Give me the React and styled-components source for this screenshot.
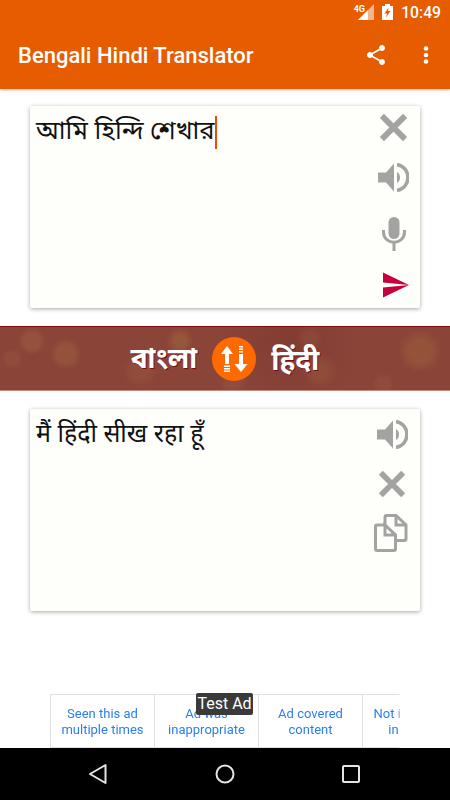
import React from "react";
import styled, { createGlobalStyle } from "styled-components";

const GlobalStyle = createGlobalStyle`
  html, body { margin: 0; padding: 0; background: #fff; }
  * { box-sizing: border-box; }
  body { font-family: Roboto, "Noto Sans", sans-serif; }
`;

const CloseIcon = ({ size = 29 }) => (
  <svg width={size} height={size} viewBox="0 0 30 30">
    <path d="M3 3 L27 27 M27 3 L3 27" stroke="#a3a3a1" strokeWidth="6" />
  </svg>
);

const SpeakerIcon = () => (
  <svg width="31" height="29" viewBox="0 0 31 29">
    <path d="M0 9.500 H8 L16 0.500 V28.500 L8 19.500 H0 Z" fill="#a3a3a1" />
    <path d="M19 9 C23 11 23 18 19 20 Z" fill="#a3a3a1" />
    <path d="M19 1.500 C33.500 4 33.500 25 19 27.500" fill="none" stroke="#a3a3a1" strokeWidth="3.500" />
  </svg>
);

const MicIcon = () => (
  <svg width="24" height="34" viewBox="0 0 24 34">
    <rect x="6.500" y="0" width="11" height="22" rx="5.500" fill="#a3a3a1" />
    <path d="M1.500 13 V15 C1.500 28.500 22.500 28.500 22.500 15 V13" fill="none" stroke="#a3a3a1" strokeWidth="3" />
    <path d="M12 25 V34" stroke="#a3a3a1" strokeWidth="3" />
  </svg>
);

const SendIcon = () => (
  <svg width="26" height="26" viewBox="0 0 26 26">
    <path d="M0 0.500 L26 13 L0 10.500 Z M0 15.500 L26 13 L0 25.500 Z" fill="#c8003c" />
  </svg>
);

const CopyIcon = () => (
  <svg width="35" height="38" viewBox="0 0 35 38" fill="none" stroke="#a3a3a1" strokeWidth="3">
    <path d="M12 11 H4 Q2.500 11 2.500 12.500 V35 Q2.500 36.500 4 36.500 H21 Q22.500 36.500 22.500 35 V21 L12 11 V21 H22.500" />
    <path d="M12 11 V3 Q12 1.500 13.500 1.500 H23 L33 11 V25 Q33 26.500 31.500 26.500 H22.500" />
    <path d="M23 1.500 V11 H33" />
  </svg>
);

const SwapIcon = () => (
  <svg width="30" height="28" viewBox="0 0 30 28" fill="#fff">
    <path d="M8 1 L14 9 H10 V19 H6 V9 H2 Z" />
    <path d="M5 20.500 H11 V22 H5 Z M5 23 H11 V24.500 H5 Z M5 25.500 H11 V27 H5 Z" />
    <path d="M22 27 L15.500 19 H20 V9 H24 V19 H28.500 Z" />
    <path d="M20 1 H24 V2.500 H20 Z M20 3.500 H24 V5 H20 Z M20 6 H24 V7.500 H20 Z" />
  </svg>
);

function App() {
  return (
    <Screen>
      <GlobalStyle />
      <StatusBar>
        <StatusNetwork>4G</StatusNetwork>
        <svg width="16" height="16" viewBox="0 0 16 16">
          <path d="M0 16 L16 0 V16 Z" fill="#f3b58c" />
          <path d="M0 16 L10 6 V16 Z" fill="#fff" />
        </svg>
        <svg width="11" height="16" viewBox="0 0 11 16">
          <path d="M3 0 H8 V2 H11 V16 H0 V2 H3 Z" fill="#fff" />
          <path d="M6.500 3.500 L2.500 9.500 H5 L4 13.500 L8.500 7 H6 Z" fill="#e65c00" />
        </svg>
        <Clock>10:49</Clock>
      </StatusBar>
      <AppBar>
        <AppTitle>Bengali Hindi Translator</AppTitle>
        <AppActions>
          <svg width="24" height="24" viewBox="0 0 24 24" fill="#fff">
            <path d="M18 16.080c-.76 0-1.440.3-1.960.77L8.910 12.700c.05-.23.090-.46.090-.7s-.04-.47-.09-.7l7.050-4.110c.54.5 1.250.81 2.040.81 1.660 0 3-1.340 3-3s-1.340-3-3-3-3 1.340-3 3c0 .24.040.47.090.7L8.040 9.810C7.500 9.310 6.790 9 6 9c-1.660 0-3 1.340-3 3s1.340 3 3 3c.79 0 1.500-.31 2.040-.81l7.120 4.160c-.05.21-.08.43-.08.65 0 1.610 1.310 2.920 2.920 2.920s2.920-1.310 2.920-2.920-1.310-2.920-2.920-2.920z" />
          </svg>
          <svg width="24" height="24" viewBox="0 0 24 24" fill="#fff">
            <circle cx="12" cy="5.500" r="2.300" />
            <circle cx="12" cy="12" r="2.300" />
            <circle cx="12" cy="18.500" r="2.300" />
          </svg>
        </AppActions>
      </AppBar>

      <Content>
        <Card>
          <CardText $size={25.5}>
            আমি হিন্দি শেখার<Caret />
          </CardText>
          <IconColumn $top={7} $right={11}>
            <IconSlot $right={1}><CloseIcon /></IconSlot>
            <IconSlot><SpeakerIcon /></IconSlot>
            <IconSlot $top={4} $right={3}><MicIcon /></IconSlot>
            <IconSlot><SendIcon /></IconSlot>
          </IconColumn>
        </Card>

        <LangBand>
          <Bokeh />
          <LangLabel>বাংলা</LangLabel>
          <SwapButton>
            <SwapIcon />
          </SwapButton>
          <LangLabel>हिंदी</LangLabel>
        </LangBand>

        <Card>
          <CardText $size={25}>मैं हिंदी सीख रहा हूँ</CardText>
          <IconColumn $top={11} $right={12}>
            <IconSlot><SpeakerIcon /></IconSlot>
            <IconSlot $right={2}><CloseIcon size={28} /></IconSlot>
            <IconSlot $top={-5}><CopyIcon /></IconSlot>
          </IconColumn>
        </Card>
      </Content>

      <AdStrip>
        <AdRow>
          <AdCell>Seen this ad<br />multiple times</AdCell>
          <AdCell>Ad was<br />inappropriate</AdCell>
          <AdCell>Ad covered<br />content</AdCell>
          <AdCell>Not interested<br />in this ad</AdCell>
        </AdRow>
        <TestBadge>Test Ad</TestBadge>
      </AdStrip>

      <NavBar>
        <svg width="20" height="22" viewBox="0 0 20 22">
          <path d="M17.500 2 V20 L2 11 Z" fill="none" stroke="#e4e4e4" strokeWidth="2" strokeLinejoin="round" />
        </svg>
        <svg width="20" height="20" viewBox="0 0 20 20">
          <circle cx="10" cy="10" r="8.500" fill="none" stroke="#e4e4e4" strokeWidth="2" />
        </svg>
        <svg width="18" height="18" viewBox="0 0 18 18">
          <rect x="1" y="1" width="16" height="16" rx="1" fill="none" stroke="#e4e4e4" strokeWidth="2" />
        </svg>
      </NavBar>
    </Screen>
  );
}

const Screen = styled.div`
  width: 450px;
  height: 800px;
  display: flex;
  flex-direction: column;
  background: #fff;
  overflow: hidden;
`;

const StatusBar = styled.div`
  height: 24px;
  flex: none;
  display: flex;
  align-items: center;
  justify-content: flex-end;
  gap: 8px;
  padding-right: 9px;
  background: #e65c00;
  color: #fff;
  position: relative;
`;

const StatusNetwork = styled.span`
  font-size: 9px;
  font-weight: 700;
  position: absolute;
  right: 85px;
  top: 4px;
`;

const Clock = styled.span`
  font-size: 15.700px;
  font-weight: 500;
`;

const AppBar = styled.div`
  height: 65px;
  flex: none;
  display: flex;
  align-items: center;
  justify-content: space-between;
  padding: 0 12px 3px 18px;
  background: #e65c00;
  box-shadow: 0 1px 3px rgba(0, 0, 0, 0.3);
`;

const AppTitle = styled.div`
  color: #fff;
  font-size: 22px;
  font-weight: 500;
`;

const AppActions = styled.div`
  display: flex;
  gap: 26px;
`;

const Content = styled.div`
  padding-top: 17px;
  display: flex;
  flex-direction: column;
  gap: 18px;
`;

const Card = styled.div`
  position: relative;
  width: 390px;
  height: 202px;
  margin-left: 30px;
  padding: 6px 6px;
  background: #fefefa;
  border-radius: 2px;
  box-shadow: 0 1px 4px rgba(0, 0, 0, 0.35);
`;

const CardText = styled.div`
  font-family: "Noto Sans", "Noto Sans Bengali", "Noto Sans Devanagari", "Lohit Bengali", "FreeSans", sans-serif;
  font-size: ${(p) => p.$size}px;
  line-height: 34px;
  color: #111;
`;

const Caret = styled.span`
  display: inline-block;
  width: 2px;
  height: 33px;
  vertical-align: middle;
  background: #f04a00;
`;

const IconColumn = styled.div`
  position: absolute;
  top: ${(p) => p.$top}px;
  right: ${(p) => p.$right}px;
  display: flex;
  flex-direction: column;
  align-items: flex-end;
  gap: 21px;
`;

const IconSlot = styled.div`
  display: flex;
  margin-top: ${(p) => p.$top || 0}px;
  margin-right: ${(p) => p.$right || 0}px;
`;

const LangBand = styled.div`
  position: relative;
  height: 65px;
  display: flex;
  align-items: center;
  justify-content: center;
  gap: 15px;
  background: #8b4438;
  border-top: 1px solid #7a0f0f;
  border-bottom: 1px solid #c08a80;
`;

const Bokeh = styled.div`
  position: absolute;
  inset: 0;
  background:
    radial-gradient(circle 16px at 66px 27px, rgba(170, 115, 70, 0.3) 55%, transparent),
    radial-gradient(circle 14px at 32px 14px, rgba(170, 115, 70, 0.3) 55%, transparent),
    radial-gradient(circle 11px at 12px 32px, rgba(170, 115, 70, 0.18) 50%, transparent),
    radial-gradient(circle 14px at 180px 14px, rgba(170, 120, 60, 0.35) 40%, transparent),
    radial-gradient(circle 18px at 140px 44px, rgba(170, 115, 70, 0.2) 40%, transparent),
    radial-gradient(circle 14px at 233px 56px, rgba(170, 115, 70, 0.2) 40%, transparent),
    radial-gradient(circle 18px at 320px 44px, rgba(170, 115, 70, 0.22) 40%, transparent),
    radial-gradient(circle 13px at 310px 11px, rgba(170, 115, 70, 0.18) 40%, transparent),
    radial-gradient(circle 22px at 420px 24px, rgba(170, 115, 60, 0.3) 50%, transparent),
    radial-gradient(circle 12px at 383px 57px, rgba(170, 115, 70, 0.18) 40%, transparent),
    radial-gradient(circle 70px at 290px 15px, rgba(120, 50, 44, 0.45), transparent);
`;

const LangLabel = styled.div`
  position: relative;
  font-family: "Noto Sans", "Noto Sans Bengali", "Noto Sans Devanagari", "Lohit Bengali", "FreeSans", sans-serif;
  font-size: 28px;
  font-weight: 700;
  color: #fff;
  text-shadow: 1px 1px 0 #7a0f0f;
`;

const SwapButton = styled.div`
  position: relative;
  width: 44px;
  height: 44px;
  border-radius: 50%;
  background: #ff6a00;
  display: flex;
  align-items: center;
  justify-content: center;
`;

const AdStrip = styled.div`
  position: relative;
  margin: auto 50px 0;
  height: 54px;
  flex: none;
`;

const AdRow = styled.div`
  height: 100%;
  display: flex;
  overflow: hidden;
  border-top: 1px solid #e0e0e0;
  border-bottom: 1px solid #e0e0e0;
  mask-image: linear-gradient(to right, #000 99.500%, rgba(0, 0, 0, 0.3));
`;

const AdCell = styled.div`
  flex: none;
  width: 104px;
  white-space: nowrap;
  padding-top: 11px;
  border-left: 1px solid #e0e0e0;
  font-size: 13px;
  line-height: 16px;
  text-align: center;
  color: #2a7fec;
`;

const TestBadge = styled.div`
  position: absolute;
  left: 146px;
  top: -1px;
  width: 57px;
  height: 22px;
  border-radius: 2px;
  background: #3a3a3a;
  color: #fff;
  font-size: 16px;
  line-height: 22px;
  text-align: center;
  white-space: nowrap;
`;

const NavBar = styled.div`
  height: 52px;
  flex: none;
  background: #000;
  display: flex;
  align-items: center;
  justify-content: space-between;
  padding: 0 90px 0 88px;
`;

export default App;
